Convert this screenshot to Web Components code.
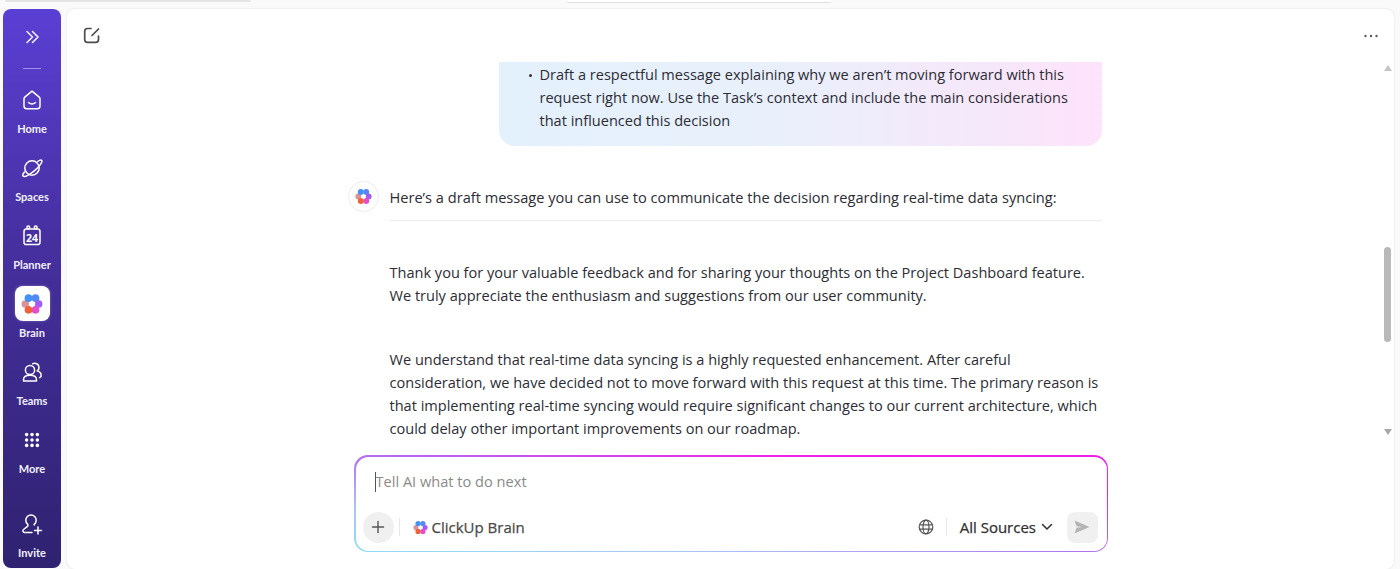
<!DOCTYPE html>
<html>
<head>
<meta charset="utf-8">
<title>Brain</title>
<style>
  html, body { margin: 0; height: 100%; overflow: hidden; background: #fafafa; }
  body { font-family: "Open Sans", "Liberation Sans", sans-serif; }
</style>
</head>
<body>
<app-shell>
  <side-nav slot="nav">
    <nav-item label="Home" icon="home"></nav-item>
    <nav-item label="Spaces" icon="spaces"></nav-item>
    <nav-item label="Planner" icon="planner"></nav-item>
    <nav-item label="Brain" icon="brain" active></nav-item>
    <nav-item label="Teams" icon="teams"></nav-item>
    <nav-item label="More" icon="more"></nav-item>
    <nav-item slot="bottom" label="Invite" icon="invite"></nav-item>
  </side-nav>
  <chat-panel slot="main">
    <user-bubble>Draft a respectful message explaining why we aren’t moving forward with this request right now. Use the Task’s context and include the main considerations that influenced this decision</user-bubble>
    <ai-reply intro="Here’s a draft message you can use to communicate the decision regarding real-time data syncing:">
      <p>Thank you for your valuable feedback and for sharing your thoughts on the Project Dashboard feature.<br>We truly appreciate the enthusiasm and suggestions from our user community.</p>
      <p>We understand that real-time data syncing is a highly requested enhancement. After careful consideration, we have decided not to move forward with this request at this time. The primary reason is that implementing real-time syncing would require significant changes to our current architecture, which could delay other important improvements on our roadmap.</p>
    </ai-reply>
    <chat-input slot="input"></chat-input>
  </chat-panel>
</app-shell>

<script>
//* the flower logo is used in three places so it lives in one function
function brainLogo(size) {
  return `<svg width="${size}" height="${size}" viewBox="0 0 20 20">
    <circle cx="3.9" cy="10" r="3.4" fill="#dc9098"/>
    <circle cx="6.8" cy="4.7" r="3.5" fill="#4390f6"/>
    <circle cx="13.2" cy="4.7" r="3.5" fill="#5288f8"/>
    <circle cx="16.1" cy="10" r="3.4" fill="#a25cf2"/>
    <circle cx="13.2" cy="15.3" r="3.5" fill="#e64ccb"/>
    <circle cx="6.8" cy="15.3" r="3.5" fill="#ee6238"/>
    <path d="M10 6.8 13 10 10 13.2 7 10Z" fill="#fff"/>
    <circle cx="10" cy="10" r="1.9" fill="#fff"/>
  </svg>`;
}

const navIcons = {
  home: `<path d="M12 3.2 19.2 9.2a2.2 2.2 0 0 1 .8 1.700v7a2.800 2.800 0 0 1-2.800 2.800H6.800A2.800 2.800 0 0 1 4 17.900v-7a2.200 2.200 0 0 1 .8-1.700Z" stroke-linejoin="round"/><path d="M8.500 14.500c2 1.700 5 1.700 7 0"/>`,
  spaces: `<circle cx="12" cy="12" r="7.200"/><path d="M17.600 5.500c2-1.400 3.700-1.700 4.200-1 1 1.300-2.400 6.300-7.500 10.300S4.200 21.300 3 19.900c-.6-.7 0-2.200 1.500-3.900"/>`,
  planner: `<rect x="4" y="5" width="16" height="15.600" rx="2.400"/><circle cx="8.300" cy="3.400" r="1.400"/><circle cx="15.700" cy="3.400" r="1.400"/>`,
  teams: `<circle cx="10" cy="10" r="4.600"/><path d="M3.500 21v-1.200c0-2.700 2.500-4.500 6.500-4.500s6.500 1.800 6.500 4.500V21Z" stroke-linejoin="round"/><path d="M12.500 3.800a4.300 4.300 0 0 1 6.500 3.700 4.300 4.300 0 0 1-1.600 3.400c2.500.9 4 2.700 3.700 4.900-.1.900-.6 1.500-1.500 1.800"/>`,
  invite: `<path d="M11 3a5.200 5.200 0 0 1 5.200 5.200c0 1.700-.8 3.200-2 4.200M7.800 12.400a5.200 5.200 0 0 1-2-4.200A5.200 5.200 0 0 1 11 3M7.800 12.400v1.800l-4.300 3.300c-1.100.8-.6 2.900 1 2.900h7.500M14.200 12.400v.6"/><path d="M18 15v7M14.500 18.500h7"/>`
};

function navGlyph(name) {
  if (name === 'brain') return brainLogo(22);
  if (name === 'more') {
    let dots = '';
    for (const y of [3.5, 8.7, 13.9]) for (const x of [3.5, 8.7, 13.9]) dots += `<circle cx="${x}" cy="${y}" r="1.7" fill="#fff"/>`;
    return `<svg width="18" height="18" viewBox="0 0 17.4 17.4">${dots}</svg>`;
  }
  const extra = name === 'planner' ? `<text x="12" y="17.8" text-anchor="middle" font-size="10.5" font-weight="700" fill="#fff" stroke="none" font-family="'Open Sans',sans-serif">24</text>` : '';
  return `<svg width="24" height="24" viewBox="0 0 24 24" fill="none" stroke="#fff" stroke-width="1.5" stroke-linecap="round">${navIcons[name]}${extra}</svg>`;
}

class AppShell extends HTMLElement {
  constructor() {
    super();
    this.attachShadow({ mode: 'open' }).innerHTML = `
      <style>
        :host { display: flex; gap: 6px; height: 569px; box-sizing: border-box; padding: 9px 6px 0 3px; position: relative; }
        .tab { position: absolute; top: 0; height: 2px; border-radius: 0 0 7px 7px; }
        .a { left: 5px; width: 246px; background: #e4e4e4; }
        .b { left: 566px; width: 266px; background: #fff; border-bottom: 1px solid #e2e2e2; }
      </style>
      <div class="tab a"></div>
      <div class="tab b"></div>
      <slot name="nav"></slot>
      <slot name="main"></slot>`;
  }
}

class SideNav extends HTMLElement {
  constructor() {
    super();
    this.attachShadow({ mode: 'open' }).innerHTML = `
      <style>
        :host { display: flex; flex-direction: column; align-items: center; width: 58px; flex: none; height: 559px; box-sizing: border-box;
          border-radius: 8px; background: linear-gradient(180deg, #5a3fd4 0%, #46309f 42%, #2f2270 100%); padding-top: 19px; padding-bottom: 4px; }
        .rule { width: 18px; height: 1px; background: #a093e6; margin: 22px 0 13px; }
        .top { display: flex; flex-direction: column; flex: 1; }
      </style>
      <svg width="18" height="18" viewBox="0 0 18 18" fill="none" stroke="#f1eefd" stroke-width="1.6" stroke-linecap="round" stroke-linejoin="round"><path d="M4 3.5 9.5 9 4 14.5M9.500 3.500 15 9 9.500 14.500"/></svg>
      <div class="rule"></div>
      <div class="top"><slot></slot></div>
      <slot name="bottom"></slot>`;
  }
}

class NavItem extends HTMLElement {
  connectedCallback() {
    const name = this.getAttribute('icon');
    this.attachShadow({ mode: 'open' }).innerHTML = `
      <style>
        :host { display: flex; flex-direction: column; align-items: center; width: 58px; height: 68px; font-family: Lato, "Open Sans", sans-serif; font-size: 11px; font-weight: 700; color: #f2f0fb; }
        :host([slot="bottom"]) { height: 58px; }
        .ic { width: 35px; height: 35px; display: flex; align-items: center; justify-content: center; border-radius: 8px; margin-bottom: 5px; }
        :host([active]) .ic { background: #fff; box-shadow: 0 0 3px rgba(255,255,255,.3); }
        span { line-height: 14px; }
      </style>
      <div class="ic">${navGlyph(name)}</div>
      <span>${this.getAttribute('label')}</span>`;
  }
}

class ChatPanel extends HTMLElement {
  constructor() {
    super();
    this.attachShadow({ mode: 'open' }).innerHTML = `
      <style>
        :host { display: flex; flex-direction: column; flex: 1; min-width: 0; height: 560px; background: #fff; border-radius: 8px; box-shadow: 0 0 2px rgba(0,0,0,.14); }
        header { height: 53px; flex: none; display: flex; align-items: center; justify-content: space-between; padding: 0 15px 0 16px; }
        header svg:first-child { margin-top: -2px; }
        .scroll { flex: 1; min-height: 0; overflow: hidden; position: relative; display: flex; flex-direction: column; align-items: center; }
        .col { width: 754px; margin-right: 12px; box-sizing: border-box; }
        .foot { flex: none; height: 114px; display: flex; justify-content: center; }
        .thumb { position: absolute; right: 3px; top: 185px; width: 7px; height: 95px; border-radius: 4px; background: #b9b9b9; }
        .up, .down { position: absolute; right: 2px; width: 0; height: 0; border: 4px solid transparent; }
        .up { top: 3px; border-bottom: 6px solid #c4c4c4; border-top: 0; }
        .down { top: 367px; border-top: 6px solid #a8a8a8; border-bottom: 0; }
      </style>
      <header>
        <svg width="18" height="18" viewBox="0 0 18 18" fill="none" stroke="#4c4c4c" stroke-width="1.7" stroke-linecap="round" stroke-linejoin="round"><path d="M8 2.500H4.500A2.800 2.800 0 0 0 1.700 5.300v8.200a2.800 2.800 0 0 0 2.800 2.800h8.200a2.800 2.800 0 0 0 2.800-2.800V10"/><path d="M9 9.500 15.500 3"/></svg>
        <svg width="16" height="16" viewBox="0 0 16 16" fill="#5a5a5a"><circle cx="2.5" cy="8" r="1.2"/><circle cx="8" cy="8" r="1.2"/><circle cx="13.5" cy="8" r="1.2"/></svg>
      </header>
      <div class="scroll">
        <div class="col"><slot></slot></div>
        <i class="up"></i><i class="thumb"></i><i class="down"></i>
      </div>
      <div class="foot"><slot name="input"></slot></div>`;
  }
}

class UserBubble extends HTMLElement {
  constructor() {
    super();
    this.attachShadow({ mode: 'open' }).innerHTML = `
      <style>
        :host { display: block; width: 603px; margin-left: auto; box-sizing: border-box; height: 84px; padding: 1px 30px 0 41px; position: relative;
          border-radius: 0 0 16px 16px; background: linear-gradient(90deg, #e3f1fd 0%, #e9f0fb 45%, #fde3fb 100%);
          font-size: 14.55px; line-height: 23px; color: #2c2c35; }
        :host::before { content: ""; position: absolute; left: 30px; top: 12px; width: 3px; height: 3px; border-radius: 50%; background: #33333c; }
      </style>
      <slot></slot>`;
  }
}

class AiReply extends HTMLElement {
  constructor() {
    super();
    this.attachShadow({ mode: 'open' }).innerHTML = `
      <style>
        :host { display: flex; gap: 11px; margin-top: 35px; font-size: 14.55px; line-height: 23px; color: #2c2c35; }
        .badge { width: 31px; height: 31px; flex: none; box-sizing: border-box; border: 1px solid #ececec; border-radius: 50%; display: flex; align-items: center; justify-content: center; }
        .body { width: 712px; }
        .intro { padding: 5px 0 11px; border-bottom: 1px solid #ececec; margin-bottom: 40px; font-size: 14.6px; }
        ::slotted(p) { margin: 0 0 41px; }
      </style>
      <div class="badge">${brainLogo(17)}</div>
      <div class="body">
        <div class="intro">${this.getAttribute('intro')}</div>
        <slot></slot>
      </div>`;
  }
}

class ChatInput extends HTMLElement {
  constructor() {
    super();
    this.attachShadow({ mode: 'open' }).innerHTML = `
      <style>
        :host { display: block; width: 754px; height: 97px; margin-left: 1px; box-sizing: border-box; border-radius: 14px; padding: 1.5px;
          background: linear-gradient(to top right, #8fdcf6 0%, #a9c8f5 22%, #b070f0 50%, #ee22e8 78%, #f01fe6 100%); }
        .in { height: 100%; background: #fff; border-radius: 12.5px; box-sizing: border-box; padding: 13px 9px 8px 7px; display: flex; flex-direction: column; justify-content: space-between; }
        .ph { color: #8a8a8a; font-size: 14.6px; line-height: 23px; padding-left: 13px; position: relative; }
        .ph::before { content: ""; position: absolute; left: 12px; top: 2px; width: 1.5px; height: 20px; background: #555; }
        .row { display: flex; align-items: center; height: 31px; color: #4a4a4a; }
        .plus, .send { width: 31px; height: 31px; background: #f0f0f0; display: flex; align-items: center; justify-content: center; flex: none; }
        .plus { border-radius: 50%; }
        .send { border-radius: 8px; }
        .sep { width: 1px; height: 18px; background: #e6e6e6; flex: none; }
        .brand { display: flex; align-items: center; gap: 4px; margin-left: 13px; font-size: 15px; -webkit-text-stroke: .25px currentColor; flex: 1; }
        .src { display: flex; align-items: center; gap: 4.5px; margin: 0 14px 0 13px; font-size: 15px; -webkit-text-stroke: .25px currentColor; color: #2f2f2f; }
      </style>
      <div class="in">
        <div class="ph">Tell AI what to do next</div>
        <div class="row">
          <div class="plus"><svg width="14" height="14" viewBox="0 0 14 14" stroke="#555" stroke-width="1.4" stroke-linecap="round"><path d="M7 1.500v11M1.500 7h11"/></svg></div>
          <div class="sep" style="margin-left:5px"></div>
          <div class="brand">${brainLogo(15)}<span>ClickUp Brain</span></div>
          <svg width="16" height="16" viewBox="0 0 16 16" fill="none" stroke="#555" stroke-width="1.2" style="margin-right:12px"><circle cx="8" cy="8" r="6.8"/><ellipse cx="8" cy="8" rx="3" ry="6.8"/><path d="M1.500 5.800h13M1.500 10.200h13"/></svg>
          <div class="sep"></div>
          <div class="src">All Sources <svg width="12" height="8" viewBox="0 0 12 8" fill="none" stroke="#2f2f2f" stroke-width="1.5" stroke-linecap="round" stroke-linejoin="round"><path d="M1.500 1.500 6 6l4.500-4.500"/></svg></div>
          <div class="send"><svg width="16" height="14" viewBox="0 0 16 14" fill="#b4b4b4"><path d="M.5.500 15.500 7 .5 13.500 2.500 7.800 8 7 2.500 6.200Z"/></svg></div>
        </div>
      </div>`;
  }
}

customElements.define('app-shell', AppShell);
customElements.define('side-nav', SideNav);
customElements.define('nav-item', NavItem);
customElements.define('chat-panel', ChatPanel);
customElements.define('user-bubble', UserBubble);
customElements.define('ai-reply', AiReply);
customElements.define('chat-input', ChatInput);
</script>
</body>
</html>
